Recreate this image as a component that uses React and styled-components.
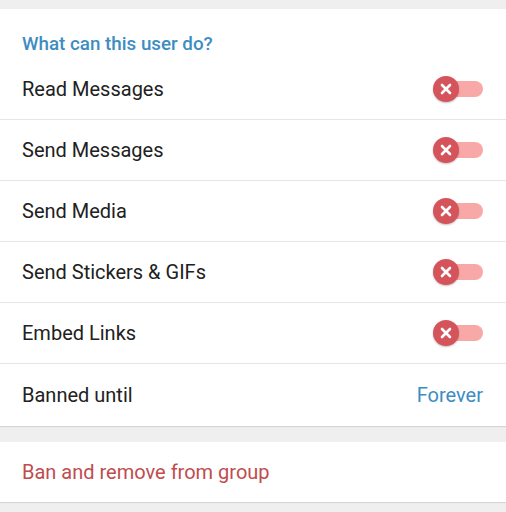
import React from "react";
import styled, { createGlobalStyle } from "styled-components";

const GlobalStyle = createGlobalStyle`
  html, body {
    margin: 0;
    padding: 0;
    background: #efefef;
    font-family: Roboto, "Noto Sans", sans-serif;
  }
`;

const Page = styled.div`
  width: 506px;
  height: 512px;
  background: #efefef;
  padding-top: 9px;
  box-sizing: border-box;
  overflow: hidden;
`;

const Section = styled.section`
  background: #fff;
  box-shadow: 0 1px 1px rgba(0, 0, 0, 0.1);
  margin-bottom: ${(p) => p.gap || 0}px;
`;

const Header = styled.div`
  height: 50px;
  padding: 24px 22px 0;
  box-sizing: border-box;
  font-size: 18.8px;
  line-height: 22px;
  font-weight: 500;
  color: #3d8dc2;
`;

const Row = styled.div`
  display: flex;
  align-items: center;
  justify-content: space-between;
  height: ${(p) => p.h || 61}px;
  padding: 0 23px 0 22px;
  box-sizing: border-box;
  border-bottom: ${(p) => (p.last ? "none" : "1px solid #e6e6e6")};
`;

const Label = styled.span`
  font-size: 20px;
  color: ${(p) => p.color || "#212121"};
`;

const Value = styled.span`
  font-size: 20px;
  color: #3d8dc2;
`;

const Track = styled.div`
  position: relative;
  width: 50px;
  height: 16px;
`;

const Rail = styled.div`
  position: absolute;
  left: 13px;
  right: 0;
  top: 0;
  bottom: 0;
  border-radius: 8px;
  background: #f9a8a8;
`;

const Knob = styled.div`
  position: absolute;
  left: 0;
  top: -5px;
  width: 26px;
  height: 26px;
  border-radius: 50%;
  background: #d5545b;
  box-shadow: 0 1px 2px rgba(0, 0, 0, 0.25);
  display: flex;
  align-items: center;
  justify-content: center;
`;

const Toggle = () => (
  <Track>
    <Rail />
    <Knob>
      <svg width="12" height="12" viewBox="0 0 12 12">
        <path d="M2 2 L10 10 M10 2 L2 10" stroke="#fff" strokeWidth="2.6" strokeLinecap="round" />
      </svg>
    </Knob>
  </Track>
);

const rights = ["Read Messages", "Send Messages", "Send Media", "Send Stickers & GIFs", "Embed Links"];

export default function App() {
  return (
    <>
      <GlobalStyle />
      <Page>
        <Section gap={16}>
          <Header>What can this user do?</Header>
          {rights.map((r) => (
            <Row key={r}>
              <Label>{r}</Label>
              <Toggle />
            </Row>
          ))}
          <Row last h={62}>
            <Label>Banned until</Label>
            <Value>Forever</Value>
          </Row>
        </Section>
        <Section>
          <Row last h={60}>
            <Label color="#c04c4e">Ban and remove from group</Label>
          </Row>
        </Section>
      </Page>
    </>
  );
}
